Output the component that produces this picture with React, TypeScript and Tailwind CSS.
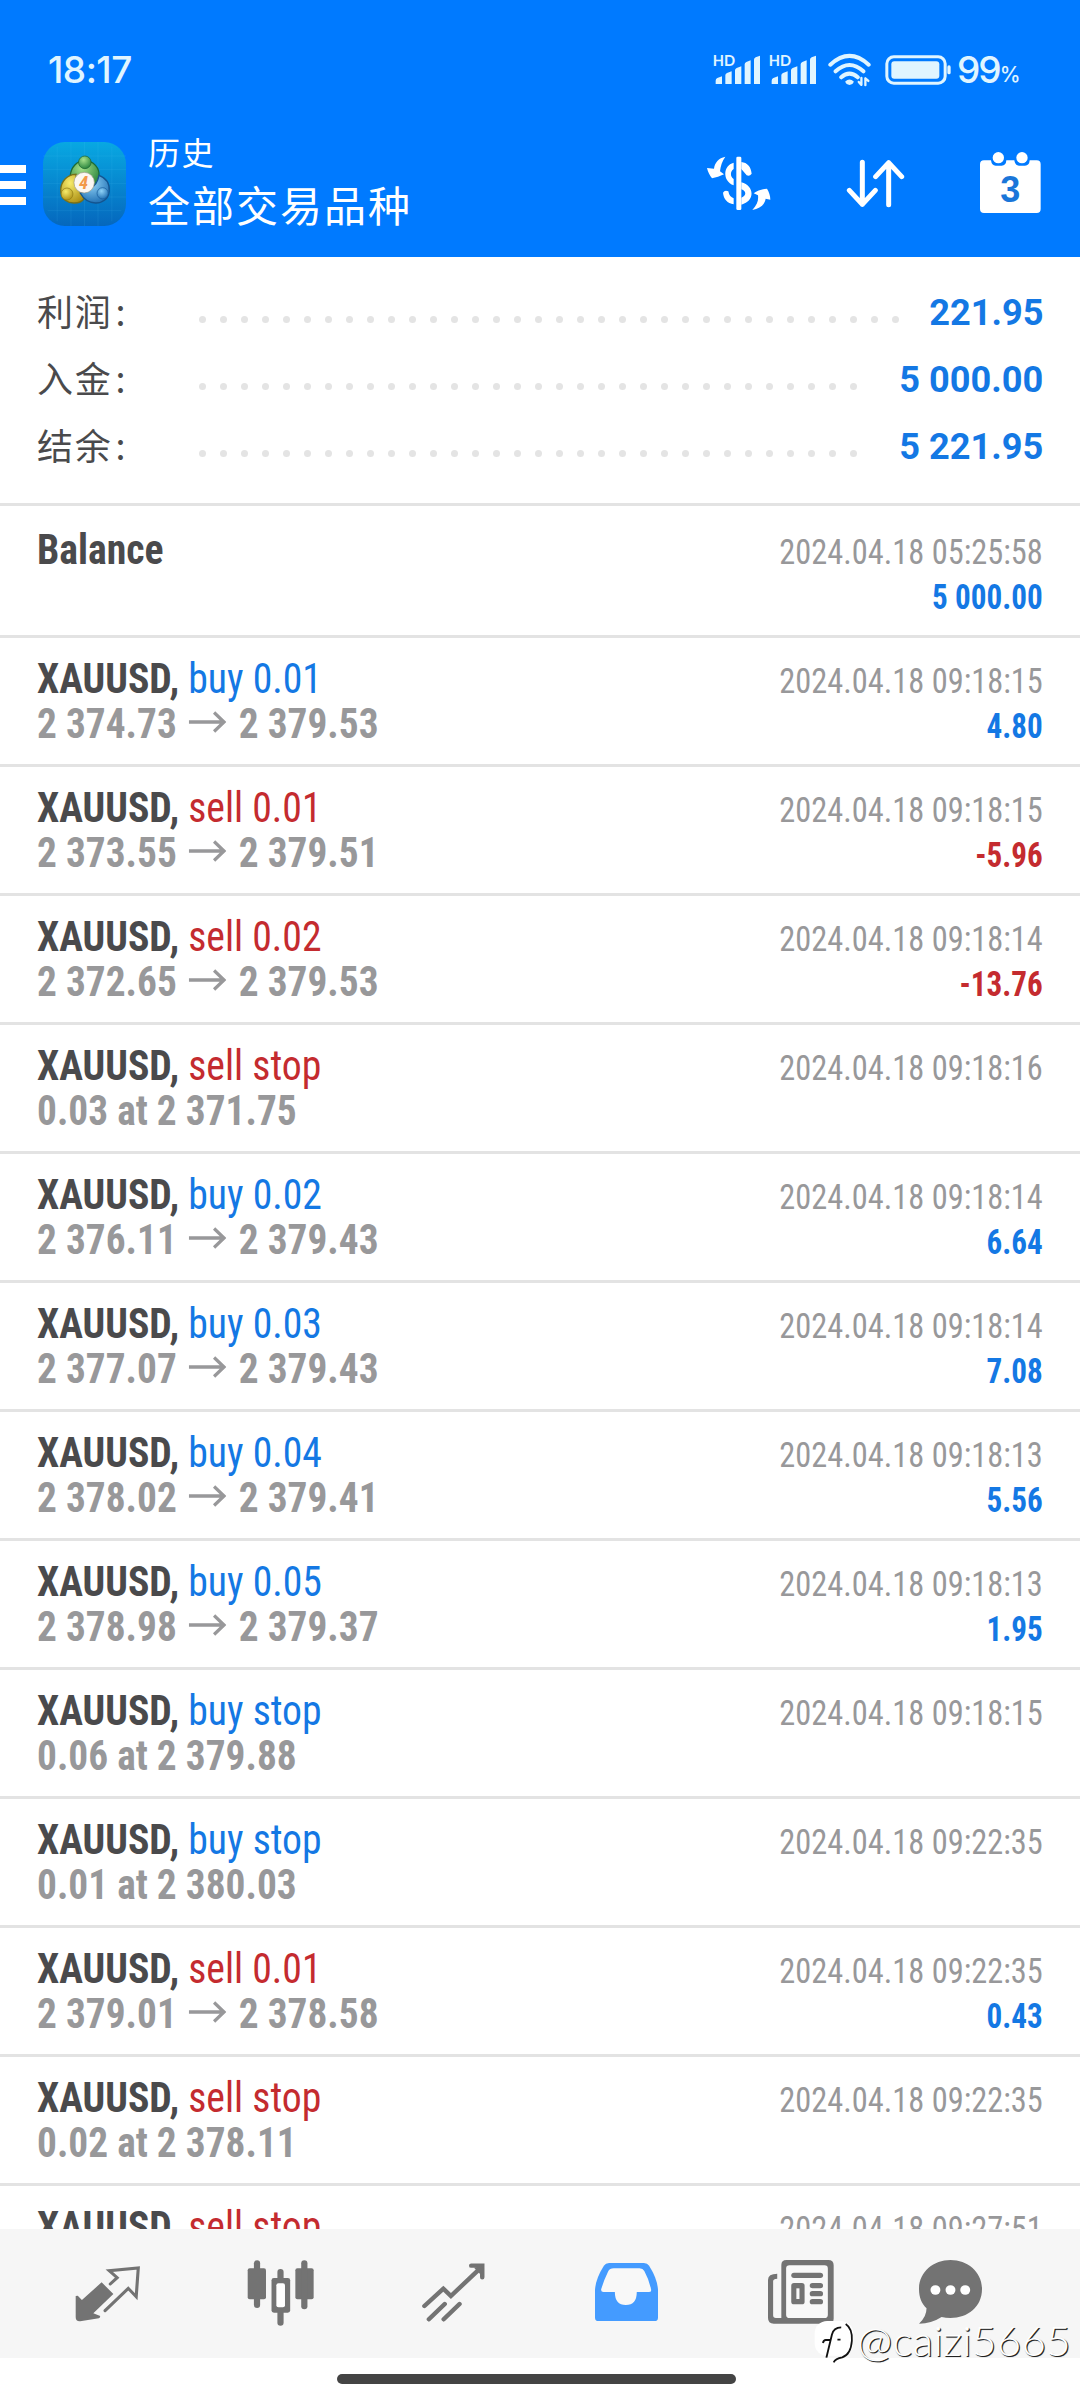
import type { ReactNode } from "react";

type Side = "buy" | "sell";

interface Deal {
  side: Side;
  action: string;
  detail: [string, string?];
  time: string;
  profit?: string;
}

const deals: Deal[] = [
  { side: "buy", action: "buy 0.01", detail: ["2 374.73", "2 379.53"], time: "2024.04.18 09:18:15", profit: "4.80" },
  { side: "sell", action: "sell 0.01", detail: ["2 373.55", "2 379.51"], time: "2024.04.18 09:18:15", profit: "-5.96" },
  { side: "sell", action: "sell 0.02", detail: ["2 372.65", "2 379.53"], time: "2024.04.18 09:18:14", profit: "-13.76" },
  { side: "sell", action: "sell stop", detail: ["0.03 at 2 371.75"], time: "2024.04.18 09:18:16" },
  { side: "buy", action: "buy 0.02", detail: ["2 376.11", "2 379.43"], time: "2024.04.18 09:18:14", profit: "6.64" },
  { side: "buy", action: "buy 0.03", detail: ["2 377.07", "2 379.43"], time: "2024.04.18 09:18:14", profit: "7.08" },
  { side: "buy", action: "buy 0.04", detail: ["2 378.02", "2 379.41"], time: "2024.04.18 09:18:13", profit: "5.56" },
  { side: "buy", action: "buy 0.05", detail: ["2 378.98", "2 379.37"], time: "2024.04.18 09:18:13", profit: "1.95" },
  { side: "buy", action: "buy stop", detail: ["0.06 at 2 379.88"], time: "2024.04.18 09:18:15" },
  { side: "buy", action: "buy stop", detail: ["0.01 at 2 380.03"], time: "2024.04.18 09:22:35" },
  { side: "sell", action: "sell 0.01", detail: ["2 379.01", "2 378.58"], time: "2024.04.18 09:22:35", profit: "0.43" },
  { side: "sell", action: "sell stop", detail: ["0.02 at 2 378.11"], time: "2024.04.18 09:22:35" },
  { side: "sell", action: "sell stop", detail: [""], time: "2024.04.18 09:27:51" },
];

const summary = [
  { label: "利润", value: "221.95", dots: 34 },
  { label: "入金", value: "5 000.00", dots: 32 },
  { label: "结余", value: "5 221.95", dots: 32 },
];

function Signal() {
  return (
    <svg className="h-[32px] w-[48px] overflow-visible" viewBox="40 40 144 96" fill="currentColor">
      <text x="39" y="78" fontSize="45" fontWeight="700" textLength="67" lengthAdjust="spacingAndGlyphs" className="font-['Lato',sans-serif]">HD</text>
      <path d="M48 133v-10q0-6 5-8l14-5v23zM77 133v-26q0-5 5-7l14-5v38zM106 133V92q0-5 5-7l14-5v53zM135 133V74q0-5 5-7l13-5v71zM163 133V60q0-5 5-7l13-5v85z" />
    </svg>
  );
}

function Wifi() {
  return (
    <svg className="h-[34px] w-[43px]" viewBox="385 39 130 102" fill="none" stroke="currentColor" strokeWidth="12" strokeLinecap="round">
      <path d="M392 74q58-53 116 0M408 94q42-38 84 0M425 112q25-22 50 0" />
      <path d="M437 125q13-12 26 0-3 10-13 10t-13-10z" fill="currentColor" stroke="none" />
      <path d="M486 114v20M486 135l-8-9M498 136v-20M498 115l9 8" strokeWidth="7" />
    </svg>
  );
}

function Battery() {
  return (
    <svg className="h-[30px] w-[66px]" viewBox="555 44 198 90" fill="currentColor">
      <rect x="560.500" y="49.500" width="175" height="79" rx="21" fill="none" stroke="currentColor" strokeWidth="9" />
      <rect x="574" y="63" width="144" height="52" rx="9" />
      <rect x="742" y="75" width="10" height="27" rx="5" />
    </svg>
  );
}

function StatusBar() {
  return (
    <div className="flex h-[108px] items-start justify-between pl-[48px] pr-[62px] pt-[53px] font-['Inter',sans-serif] text-[#e0f5ff]">
      <span className="text-[37px] leading-[34px] font-medium tracking-[-0.500px]">18:17</span>
      <div className="flex w-[305px] shrink-0 items-start">
        <Signal />
        <span className="ml-[8px] flex"><Signal /></span>
        <span className="ml-[11px] flex"><Wifi /></span>
        <span className="ml-[14px] mt-[2px] flex"><Battery /></span>
        <span className="ml-[6px] w-[43px] text-[37px] leading-[34px] font-medium tracking-[-2px]">99</span>
        <span className="mt-[5px] text-[21px] leading-[34px] font-medium">%</span>
      </div>
    </div>
  );
}

function AppLogo() {
  return (
    <svg className="h-[84px] w-[83px]" viewBox="126 36 252 252" preserveAspectRatio="none">
      <defs>
        <linearGradient id="tile" x1="0" y1="0" x2="0" y2="1">
          <stop offset="0" stopColor="#08a8e2" />
          <stop offset="1" stopColor="#0567bd" />
        </linearGradient>
        <radialGradient id="leaf" cx=".4" cy=".3" r=".8">
          <stop offset="0" stopColor="#a5e08a" />
          <stop offset="1" stopColor="#1b7a35" />
        </radialGradient>
        <radialGradient id="sun" cx=".4" cy=".3" r=".8">
          <stop offset="0" stopColor="#f7ec6c" />
          <stop offset="1" stopColor="#a88a10" />
        </radialGradient>
        <radialGradient id="sea" cx=".4" cy=".3" r=".8">
          <stop offset="0" stopColor="#8fd2f7" />
          <stop offset="1" stopColor="#1566ad" />
        </radialGradient>
      </defs>
      <rect x="126" y="36" width="252" height="252" rx="66" fill="url(#tile)" />
      <path d="M169 50v224M211 36v252M252 36v252M293 36v252M335 50v224M126 78h252M126 119h252M126 160h252M126 201h252M140 242h224" stroke="#5fd0ff" strokeOpacity=".16" strokeWidth="2" />
      <path d="M253 92c26 0 46 22 43 48-1 14-8 24-16 30l-58-2c-10-8-14-20-13-32 2-24 20-44 44-44z" fill="url(#leaf)" stroke="#1d6b34" strokeWidth="4" />
      <path d="M216 134c-24 6-38 28-36 50 2 24 20 36 42 35 12 0 22-4 28-12l-8-40c-8-8-16-20-16-34z" fill="url(#sun)" stroke="#77701a" strokeWidth="4" />
      <path d="M296 136c22 8 33 26 31 48-2 22-20 36-42 35-20-1-36-12-46-30l30-14c14-6 24-22 27-39z" fill="url(#sea)" stroke="#14548f" strokeWidth="4" />
      <circle cx="253" cy="97" r="19" fill="url(#leaf)" stroke="#175f2c" strokeWidth="2" />
      <circle cx="199" cy="192" r="18" fill="url(#sun)" stroke="#8d7a14" strokeWidth="2" />
      <circle cx="307" cy="190" r="17" fill="url(#sea)" stroke="#155a9a" strokeWidth="2" />
      <circle cx="251" cy="158" r="31" fill="#fbf7f3" stroke="#9b9a86" strokeWidth="2" />
      <text x="249" y="178" textAnchor="middle" fontSize="56" fontWeight="700" fontStyle="italic" fill="#f2994a" className="font-['Roboto_Condensed',sans-serif]">4</text>
    </svg>
  );
}

function CurrencyIcon() {
  return (
    <svg className="h-[57px] w-[65px]" viewBox="50 45 195 171" fill="currentColor">
      <path d="M108 50C88 54 76 68 74 86L53 84C56 96 61 106 68 115C80 113 92 109 104 103L92 94C94 78 98 64 108 50Z" />
      <path d="M189 210C203 194 208 182 206 166L193 160C205 152 219 147 233 146C239 156 243 166 243 179L229 176C226 194 212 206 189 210Z" />
      <rect x="141" y="50" width="15" height="160" rx="4" />
      <path d="M133 68C101 76 98 122 133 136V117C122 110 122 94 133 87ZM101 158C103 178 114 189 133 193V175C125 172 119 166 117 154Q106 149 101 158ZM156 66C174 68 185 80 187 101Q181 110 172 106L156 87ZM156 127C196 137 198 184 156 194V173C172 167 172 154 156 148Z" />
    </svg>
  );
}

function SortIcon() {
  return (
    <svg className="h-[49px] w-[59px]" viewBox="468 57 177 147" fill="none" stroke="currentColor" strokeWidth="15" strokeLinecap="round" strokeLinejoin="round">
      <path d="M517 67v126M478 151l39 42 39-42M596 194V68M557 110l39-42 39 42" />
    </svg>
  );
}

function CalendarIcon() {
  return (
    <svg className="h-[61px] w-[61px]" viewBox="870 35 183 183">
      <path d="M882 60h21q2 16 14 16h18q13 0 14-16h24q2 16 14 16h18q13 0 14-16h21q12 0 12 12v134q0 12-12 12H882q-12 0-12-12V72q0-12 12-12z" fill="currentColor" />
      <circle cx="925" cy="52" r="17" fill="currentColor" />
      <circle cx="996" cy="52" r="17" fill="currentColor" />
      <text x="961" y="185" textAnchor="middle" fontSize="108" fontWeight="700" fill="#1a76d9" className="font-['Liberation_Sans',sans-serif]">3</text>
    </svg>
  );
}

function Toolbar() {
  return (
    <div className="flex h-[149px] items-start text-white">
      <div className="mt-[57px] flex w-[26px] flex-col gap-[8px]">
        <i className="h-[8px] bg-white" />
        <i className="h-[8px] bg-white" />
        <i className="h-[8px] bg-white" />
      </div>
      <div className="ml-[17px] mt-[34px]"><AppLogo /></div>
      <div className="ml-[22px] mt-[20px] flex flex-col font-['Noto_Sans_CJK_SC',sans-serif]">
        <span className="text-[32px] leading-[46px] tracking-[1.500px]">历史</span>
        <span className="text-[42px] leading-[60px] tracking-[2px]">全部交易品种</span>
      </div>
      <div className="ml-auto mr-[39px] flex">
        <div className="mt-[47px]"><CurrencyIcon /></div>
        <div className="ml-[75px] mt-[51px]"><SortIcon /></div>
        <div className="ml-[75px] mt-[44px]"><CalendarIcon /></div>
      </div>
    </div>
  );
}

function Dots({ count }: { count: number }) {
  return (
    <div className="flex gap-[14px]">
      {Array.from({ length: count }, (_, i) => (
        <i key={i} className="size-[7px] rounded-full bg-[#e4e4e4]" />
      ))}
    </div>
  );
}

function Summary() {
  return (
    <section className="h-[249px] border-b-[3px] border-[#e3e3e3] px-[37px] pt-[22px]">
      {summary.map((s) => (
        <div key={s.label} className="flex h-[67px] items-center">
          <span className="-mt-[5px] w-[162px] font-['Noto_Sans_CJK_SC',sans-serif] text-[36px] leading-[62px] tracking-[1.800px] text-[#4a4a4c]">
            {s.label}
            <span className="ml-[3px]">:</span>
          </span>
          <div className="mt-[13px]"><Dots count={s.dots} /></div>
          <span className="ml-auto origin-right scale-x-[0.965] font-['Roboto',sans-serif] text-[37.500px] leading-[67px] font-bold text-[#1478e4]">{s.value}</span>
        </div>
      ))}
    </section>
  );
}

function Arrow() {
  return (
    <svg className="mx-[13px] inline-block h-[22px] w-[40px] align-[5px]" viewBox="0 0 40 22" fill="none" stroke="currentColor" strokeWidth="3.500">
      <path d="M0 11h38M27 1.500l10.500 9.500L27 20.500" />
    </svg>
  );
}

function Row({ title, detail, time, profit, loss }: { title: ReactNode; detail?: ReactNode; time: string; profit?: string; loss?: boolean }) {
  return (
    <div className="flex h-[129px] shrink-0 items-baseline justify-between border-b-[3px] border-[#e3e3e3] px-[37px] pt-[18px] font-['Roboto_Condensed',sans-serif] whitespace-nowrap">
      <div className="text-[42px] leading-[45px] font-bold">
        <div className="origin-left scale-x-[0.945] text-[#4a4a4c]">{title}</div>
        <div className="origin-left scale-x-[0.937] text-[#98989a]">{detail}</div>
      </div>
      <div className="text-right text-[35px] leading-[45px]">
        <div className="origin-right scale-x-[0.925] text-[#98989a]">{time}</div>
        {profit && (
          <div className={loss ? "origin-right scale-x-[0.89] font-bold text-[#c42b2f]" : "origin-right scale-x-[0.89] font-bold text-[#1478e4]"}>{profit}</div>
        )}
      </div>
    </div>
  );
}

function History() {
  return (
    <main className="flex h-[1723px] flex-col overflow-hidden pt-[3px]">
      <Row title="Balance" time="2024.04.18 05:25:58" profit="5 000.00" />
      {deals.map((d, i) => (
        <Row
          key={i}
          title={
            <>
              XAUUSD,{" "}
              <span className={d.side === "buy" ? "font-normal text-[#1478e4]" : "font-normal text-[#c42b2f]"}>{d.action}</span>
            </>
          }
          detail={
            d.detail[1] ? (
              <>
                {d.detail[0]}
                <Arrow />
                {d.detail[1]}
              </>
            ) : (
              d.detail[0]
            )
          }
          time={d.time}
          profit={d.profit}
          loss={d.profit?.startsWith("-")}
        />
      ))}
    </main>
  );
}

function QuotesIcon() {
  return (
    <svg className="h-[56px] w-[65px]" viewBox="218 257 188 168" preserveAspectRatio="none">
      <path d="M295 306l34 35-58 58 20 8q0 6-4 7l-54 9q-13 1-13-12v-64l6-1 12 13z" fill="currentColor" />
      <path d="M320 311l20-19-23-21 84-8-6 86-23-25-67 67" fill="none" stroke="currentColor" strokeWidth="9" strokeLinecap="round" />
    </svg>
  );
}

function CandlesIcon() {
  return (
    <svg className="h-[66px] w-[67px]" viewBox="716 239 194 198" preserveAspectRatio="none" fill="currentColor">
      <rect x="718" y="264" width="53" height="93" rx="6" />
      <rect x="736" y="240" width="18" height="143" rx="9" />
      <rect x="856" y="264" width="53" height="93" rx="6" />
      <rect x="873" y="240" width="18" height="147" rx="9" />
      <rect x="804" y="266" width="18" height="34" rx="9" />
      <rect x="804" y="386" width="18" height="50" rx="9" />
      <rect x="787" y="293" width="54" height="104" rx="7" />
      <rect x="801" y="309" width="25" height="72" rx="6" fill="#fff" />
    </svg>
  );
}

function ChartIcon() {
  return (
    <svg className="h-[59px] w-[63px]" viewBox="1225 248 183 177" preserveAspectRatio="none" fill="none" stroke="currentColor" strokeWidth="13" strokeLinejoin="miter" strokeLinecap="round">
      <path d="M1232 377l55-52 22 22 88-86M1368 256h32v35M1245 417l46-46M1288 417l46-46" />
      <path d="M1376 262l24-6v32z" fill="currentColor" stroke="none" />
    </svg>
  );
}

function InboxIcon() {
  return (
    <svg className="h-[58px] w-[63px]" viewBox="162 249 184 174" preserveAspectRatio="none">
      <path d="M203 249h102q10 0 15 8 26 42 26 76v80q0 10-10 10H172q-10 0-10-10v-80q0-34 26-76 5-8 15-8z" fill="#449bff" />
      <path d="M217 265h75q10 0 14 8 14 26 20 56 1 7-7 7h-35q0 39-32 39t-32-39h-33q-8 0-7-8 8-28 20-53 5-10 17-10z" fill="#f8f8f8" />
    </svg>
  );
}

function NewsIcon() {
  return (
    <svg className="h-[64px] w-[66px]" viewBox="664 240 193 192" preserveAspectRatio="none">
      <path d="M718 240h122q16 0 16 16v160q0 15-16 15H681q-17 0-17-17V300q0-19 27-19v15q-12 0-12 8v102q0 8 8 8h16V255q0-15 15-15z" fill="currentColor" />
      <rect x="717" y="256" width="122" height="158" rx="10" fill="#f8f8f8" />
      <g fill="currentColor">
        <rect x="732" y="278" width="93" height="16" rx="8" />
        <rect x="732" y="309" width="39" height="64" rx="8" />
        <rect x="786" y="309" width="39" height="16" rx="8" />
        <rect x="786" y="333" width="39" height="16" rx="8" />
        <rect x="786" y="357" width="39" height="16" rx="8" />
      </g>
      <rect x="747" y="325" width="9" height="32" fill="#f8f8f8" />
    </svg>
  );
}

function ChatIcon() {
  return (
    <svg className="h-[64px] w-[63px]" viewBox="1102 240 184 192" preserveAspectRatio="none">
      <path d="M1194 240c50 0 92 36 92 87 0 54-42 87-92 87q-14 0-26-3-30 20-66 20 22-20 22-46c-14-14-22-32-22-58 0-51 42-87 92-87z" fill="currentColor" />
      <circle cx="1150" cy="330" r="14.500" fill="#fff" />
      <circle cx="1194" cy="330" r="14.500" fill="#fff" />
      <circle cx="1237" cy="330" r="14.500" fill="#fff" />
    </svg>
  );
}

function TabBar() {
  return (
    <nav className="flex h-[129px] items-start bg-[#f6f6f6] pl-[21px] text-[#737373]">
      <div className="mt-[37px] flex w-[173px] justify-center"><QuotesIcon /></div>
      <div className="mt-[31px] flex w-[173px] justify-center"><CandlesIcon /></div>
      <div className="mt-[34px] flex w-[173px] justify-center"><ChartIcon /></div>
      <div className="mt-[34px] flex w-[173px] justify-center"><InboxIcon /></div>
      <div className="mt-[31px] flex w-[176px] justify-center"><NewsIcon /></div>
      <div className="mt-[31px] flex w-[122px] justify-center"><ChatIcon /></div>
    </nav>
  );
}

function Watermark() {
  return (
    <div className="absolute right-[9px] bottom-[34px] flex items-center">
      <svg className="mt-[4px] h-[43px] w-[41px]" viewBox="800 428 119 129" preserveAspectRatio="none" fill="none">
        <rect x="802" y="428" width="112" height="104" rx="36" fill="#fff" />
        <path d="M892 437q20 14 18 50-3 42-28 50-20 4-25 15" stroke="#111" strokeWidth="5" />
        <path d="M879 447q-22 0-27 22l-16 69M826 494q2-9 8-9h14M868 484h9" stroke="#111" strokeWidth="5.500" />
      </svg>
      <span className="ml-[2px] font-['Lato',sans-serif] text-[42px] leading-[52px] font-light tracking-[0.400px] text-white [text-shadow:1px_1px_0_#222,1px_1px_1px_#0008]">@caizi5665</span>
    </div>
  );
}

export default function App() {
  return (
    <div className="relative flex h-[2400px] w-[1080px] flex-col overflow-hidden bg-white">
      <header className="h-[257px] bg-[#007aff]">
        <StatusBar />
        <Toolbar />
      </header>
      <Summary />
      <History />
      <TabBar />
      <div className="flex h-[42px] justify-center pr-[7px] pt-[16px]">
        <div className="h-[10px] w-[399px] rounded-full bg-[#444]" />
      </div>
      <Watermark />
    </div>
  );
}
